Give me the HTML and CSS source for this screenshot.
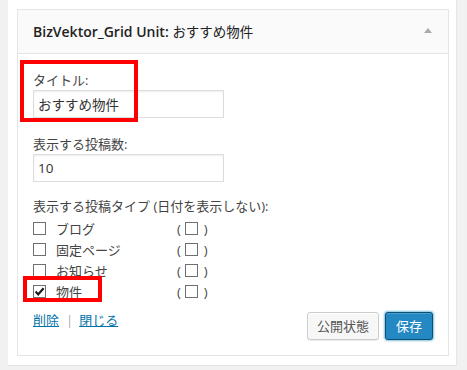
FILE: index.html
```html
<!DOCTYPE html>
<html lang="ja">
<head>
<meta charset="utf-8">
<title>BizVektor_Grid Unit</title>
<link rel="stylesheet" href="styles.css">
</head>
<body>
<div class="holder">
  <div class="widget">
    <div class="widget-top">
      <h4 class="widget-title">BizVektor_Grid Unit: <span class="in-title">おすすめ物件</span></h4>
      <span class="toggle"></span>
    </div>
    <div class="widget-inside">
      <div class="field first">
        <label class="lbl">タイトル:</label>
        <input class="text" type="text" value="おすすめ物件">
      </div>
      <div class="field second">
        <label class="lbl">表示する投稿数:</label>
        <input class="text" type="text" value="10">
      </div>
      <div class="types">
        <div class="lbl">表示する投稿タイプ (日付を表示しない):</div>
        <ul class="type-list">
          <li class="type-row"><span class="type-main"><span class="cb"></span><span class="type-name">ブログ</span></span><span class="paren">(<span class="cb inner"></span>)</span></li>
          <li class="type-row"><span class="type-main"><span class="cb"></span><span class="type-name">固定ページ</span></span><span class="paren">(<span class="cb inner"></span>)</span></li>
          <li class="type-row"><span class="type-main"><span class="cb"></span><span class="type-name">お知らせ</span></span><span class="paren">(<span class="cb inner"></span>)</span></li>
          <li class="type-row"><span class="type-main"><span class="cb checked"><svg viewBox="0 0 13 13" width="13" height="13"><path d="M2.6 6.6 L5.2 9.4 L10.6 3.2" fill="none" stroke="#1a1a1a" stroke-width="2.2"/></svg></span><span class="type-name">物件</span></span><span class="paren">(<span class="cb inner"></span>)</span></li>
        </ul>
      </div>
      <div class="actions">
        <div class="links"><a href="#" class="link">削除</a><span class="sep">|</span><a href="#" class="link">閉じる</a></div>
        <div class="buttons">
          <button class="btn">公開状態</button>
          <button class="btn primary">保存</button>
        </div>
      </div>
    </div>
    <span class="mark mark-title"></span>
    <span class="mark mark-check"></span>
  </div>
</div>
</body>
</html>
```
FILE: styles.css
```css
* { box-sizing: border-box; }
html, body {
  margin: 0;
  padding: 0;
  background: #f1f1f1;
  font-family: "Open Sans", "Noto Sans CJK JP", sans-serif;
  color: #444;
  font-size: 13px;
}
.holder {
  margin-left: 8px;
  width: 449px;
  height: 366px;
  background: #fff;
  padding: 9px 7px 0 9px;
  border-right: 1px solid #e6e6e6;
  border-bottom: 1px solid #e2e2e2;
}
.widget {
  position: relative;
  width: 432px;
  border: 1px solid #e5e5e5;
  background: #fff;
}
.widget-top {
  display: flex;
  align-items: center;
  justify-content: space-between;
  height: 44px;
  padding: 0 16px 0 15px;
  background: #fafafa;
  border-bottom: 1px solid #e5e5e5;
}
.widget-title {
  margin: 1px 0 0;
  font-size: 14px;
  font-weight: 600;
  line-height: 18px;
  color: #222;
}
.in-title { font-weight: 400; font-size: 13.5px; color: #222; }
.toggle {
  width: 0;
  height: 0;
  border-left: 4.5px solid transparent;
  border-right: 4.5px solid transparent;
  border-bottom: 5px solid #aaa;
  margin-top: -2px;
}
.widget-inside {
  padding: 0 15px 15px 15px;
}
.lbl {
  display: block;
  line-height: 18px;
  font-size: 13px;
  color: #444;
}
.field.first { padding-top: 17px; }
.field.second { margin-top: 17px; }
.text {
  display: block;
  margin: 1px 0 0;
  width: 191px;
  height: 28px;
  padding: 0 4px;
  border: 1px solid #ddd;
  box-shadow: inset 0 1px 2px rgba(0,0,0,.07);
  font-family: "Open Sans", "Noto Sans CJK JP", sans-serif;
  font-size: 13.5px;
  color: #333;
  background: #fff;
  outline: none;
}
.types { margin-top: 15px; }
.type-list {
  list-style: none;
  margin: 3px 0 0;
  padding: 0;
}
.type-row {
  display: flex;
  align-items: center;
  height: 21px;
}
.type-main {
  display: flex;
  align-items: center;
  width: 144px;
}
.cb {
  display: inline-block;
  width: 13px;
  height: 13px;
  border: 1px solid #6f6f6f;
  background: #fff;
  flex: none;
}
.cb svg { display: block; margin: -1px; }
.type-name { margin-left: 10px; line-height: 18px; }
.paren {
  display: flex;
  align-items: center;
  line-height: 18px;
  color: #444;
}
.cb.inner { margin: 0 6px 0 4px; }
.actions {
  margin-top: 9px;
  display: flex;
  justify-content: space-between;
  align-items: flex-start;
}
.links { line-height: 18px; display: flex; }
.link { color: #0073aa; text-decoration: underline; }
.sep { color: #aaa; margin: 0 6px 0 7px; }
.buttons {
  display: flex;
  gap: 6px;
  margin-top: 1px;
}
.btn {
  height: 28px;
  padding: 0 9px;
  border: 1px solid #ccc;
  border-radius: 3px;
  background: #f7f7f7;
  box-shadow: inset 0 1px 0 #fff, 0 1px 0 rgba(0,0,0,.08);
  font-family: "Open Sans", "Noto Sans CJK JP", sans-serif;
  font-size: 13px;
  color: #555;
  line-height: 26px;
}
.btn.primary {
  padding: 0 10px;
  background: #2489c3;
  border-color: #0e4e72;
  color: #fff;
  box-shadow: 0 0 2px 1px rgba(30,140,190,.55), inset 0 1px 0 rgba(120,200,230,.4);
}
.mark {
  position: absolute;
  border: 4px solid #f00;
  pointer-events: none;
}
.mark-title { left: 2px; top: 50px; width: 118px; height: 62px; }
.mark-check { left: 5px; top: 266px; width: 79px; height: 26px; }
```
